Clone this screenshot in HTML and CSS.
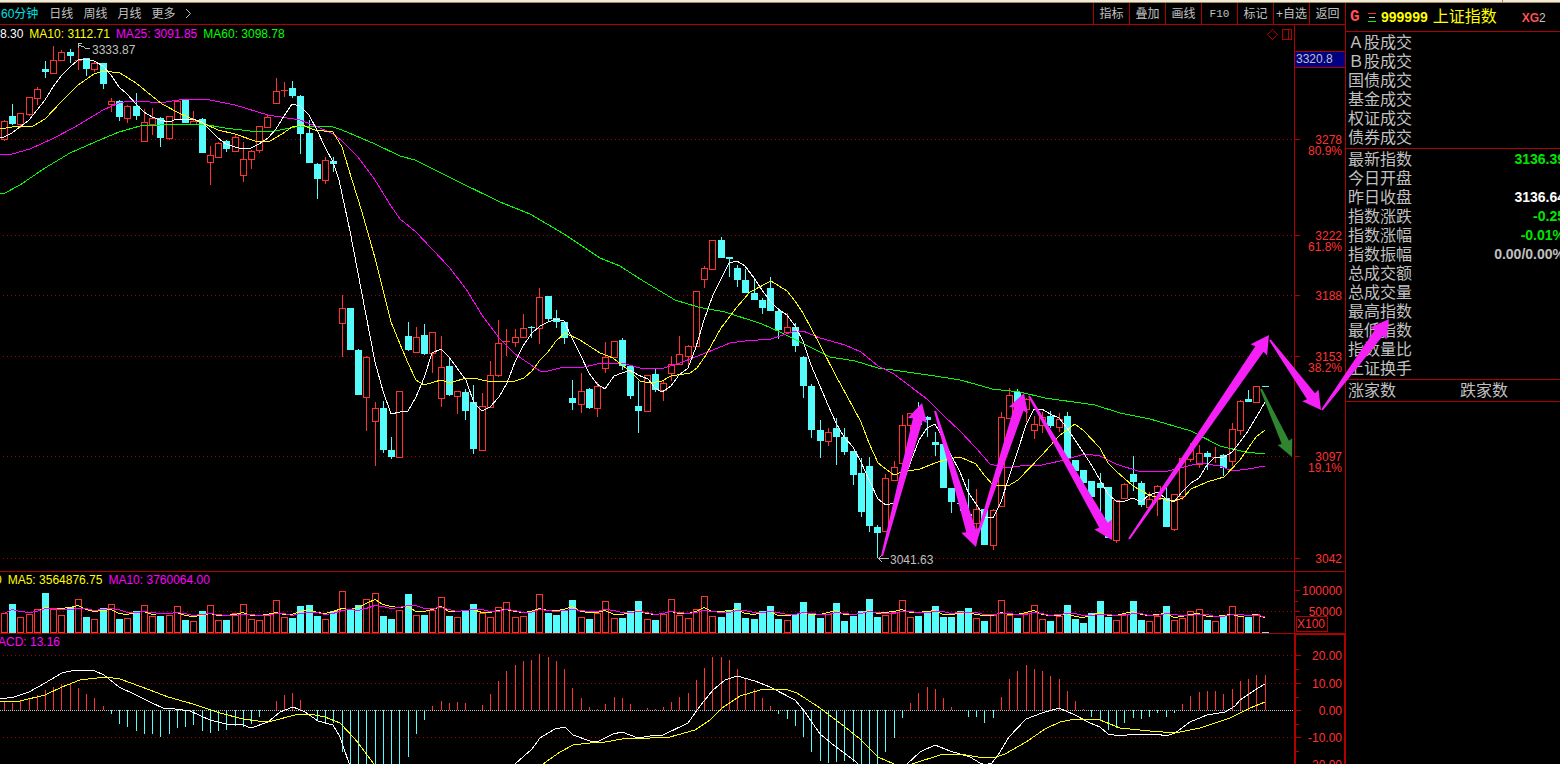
FILE: index.html
```
<!DOCTYPE html>
<html lang="zh-CN">
<head>
<meta charset="utf-8">
<title>999999 上证指数</title>
<link rel="stylesheet" href="styles.css">
</head>
<body>
<div class="strip"><span class="strip-mark"></span></div>
<div class="app">
  <main class="board">
    <nav class="toolbar">
      <div class="periods">
        <button class="period is-active">60分钟</button>
        <button class="period">日线</button>
        <button class="period">周线</button>
        <button class="period">月线</button>
        <button class="period">更多</button>
        <svg class="more" width="7" height="11" viewBox="0 0 7 11"><path d="M1 1 L5.5 5.5 L1 10"/></svg>
      </div>
      <div class="tools">
        <button class="tool">指标</button>
        <button class="tool">叠加</button>
        <button class="tool">画线</button>
        <button class="tool tool-key">F10</button>
        <button class="tool">标记</button>
        <button class="tool">+自选</button>
        <button class="tool">返回</button>
      </div>
    </nav>
    <div class="panels">
      <section class="panel">
        <svg class="plot" id="price" viewBox="0 25 1294 546" preserveAspectRatio="none"></svg>
        <p class="legend"><span class="white">8.30</span><span class="yellow">MA10: 3112.71</span><span class="magenta">MA25: 3091.85</span><span class="green">MA60: 3098.78</span></p>
      </section>
      <svg class="axis" id="price-axis"></svg>
      <section class="panel">
        <svg class="plot" id="volume" viewBox="0 572 1294 61" preserveAspectRatio="none"></svg>
        <p class="legend legend-volume"><span class="yellow">0</span><span class="yellow">MA5: 3564876.75</span><span class="magenta">MA10: 3760064.00</span></p>
      </section>
      <svg class="axis" id="volume-axis"></svg>
      <section class="panel panel-last">
        <svg class="plot" id="macd" viewBox="0 634 1294 130" preserveAspectRatio="none"></svg>
        <p class="legend legend-macd"><span class="magenta">MACD: 13.16</span></p>
      </section>
      <svg class="axis axis-focus" id="macd-axis"></svg>
    </div>
  </main>
  <aside class="quote">
    <header class="quote-head">
      <span class="flag">G</span>
      <svg class="bars" width="8" height="11" viewBox="0 0 8 11"><path class="bar-red" d="M0 1.5H8"/><path class="bar-mid" d="M1 5.5H7"/><path class="bar-green" d="M0 9.5H8"/></svg>
      <span class="code">999999</span>
      <h1 class="name">上证指数</h1>
      <span class="tag"><b>XG</b>2</span>
    </header>
    <dl class="rows">
      <div class="row"><dt>Ａ股成交</dt></div>
      <div class="row"><dt>Ｂ股成交</dt></div>
      <div class="row"><dt>国债成交</dt></div>
      <div class="row"><dt>基金成交</dt></div>
      <div class="row"><dt>权证成交</dt></div>
      <div class="row"><dt>债券成交</dt></div>
    </dl>
    <dl class="rows">
      <div class="row"><dt>最新指数</dt><dd class="down">3136.39</dd></div>
      <div class="row"><dt>今日开盘</dt></div>
      <div class="row"><dt>昨日收盘</dt><dd class="flat">3136.64</dd></div>
      <div class="row"><dt>指数涨跌</dt><dd class="down">-0.25</dd></div>
      <div class="row"><dt>指数涨幅</dt><dd class="down">-0.01%</dd></div>
      <div class="row"><dt>指数振幅</dt><dd>0.00/0.00%</dd></div>
      <div class="row"><dt>总成交额</dt></div>
      <div class="row"><dt>总成交量</dt></div>
      <div class="row"><dt>最高指数</dt></div>
      <div class="row"><dt>最低指数</dt></div>
      <div class="row"><dt>指数量比</dt></div>
      <div class="row"><dt>上证换手</dt></div>
    </dl>
    <div class="counts"><span>涨家数</span><span>跌家数</span></div>
  </aside>
</div>
<svg class="drawings" id="drawings"></svg>
<script src="chart.js"></script>
</body>
</html>
```
FILE: styles.css
```
* { box-sizing: border-box; }

:root {
  --line: #b00000;
  --up: #ff3232;
  --down: #54fcfc;
  --text: #c0c0c0;
  --magenta: #ff00ff;
}

body {
  margin: 0;
  height: 100vh;
  display: flex;
  flex-direction: column;
  overflow: hidden;
  position: relative;
  background: #000;
  color: var(--text);
  font-family: "Liberation Sans", "Noto Sans CJK SC", sans-serif;
  font-size: 12px;
}

p, dl, dd, h1 { margin: 0; }

.strip {
  height: 3px;
  flex: none;
  display: flex;
  justify-content: flex-end;
  padding-right: 57px;
  background: #f0ead8;
  border-bottom: 1px solid #a88850;
}
.strip-mark { width: 1px; background: #a88850; }

.app { flex: 1; min-height: 0; display: grid; grid-template-columns: minmax(0, 1fr) 215px; }

.board { display: flex; flex-direction: column; min-height: 0; }

.toolbar {
  height: 22px;
  flex: none;
  display: flex;
  justify-content: space-between;
  border-bottom: 1px solid var(--line);
}
.periods { display: flex; align-items: center; gap: 10px; padding-left: 1px; }
.tools { display: flex; }
button {
  margin: 0;
  padding: 0;
  border: 0;
  background: none;
  color: var(--text);
  font: 12px/20px "Liberation Sans", "Noto Sans CJK SC", sans-serif;
  white-space: nowrap;
}
.period.is-active { color: #00e0e0; padding-right: 1px; }
.more { fill: none; stroke: var(--text); shape-rendering: auto; }
.tool { width: 36px; border-left: 1px solid var(--line); }
.tool-key { font: 11px/20px "Liberation Mono", monospace; }

.panels {
  flex: 1;
  min-height: 0;
  display: grid;
  grid-template-columns: minmax(0, 1fr) 51px;
  grid-template-rows: 547fr 62fr 130fr;
}
.panel {
  display: grid;
  grid-template: minmax(0, 1fr) / minmax(0, 1fr);
  min-height: 0;
  overflow: hidden;
  border-bottom: 1px solid var(--line);
}
.panel-last { border-bottom: 0; }
.plot, .legend { grid-area: 1 / 1; }
.plot { width: 100%; height: 100%; display: block; }
.legend { display: flex; gap: 6px; line-height: 16px; padding-top: 1px; align-self: start; white-space: nowrap; }
.legend-volume { margin-left: -5px; padding-top: 0; }
.legend-macd { margin-left: -12px; padding-top: 0; }
.white { color: #fff; }
.yellow { color: #ff0; }
.magenta { color: var(--magenta); }
.green { color: #0f0; }

.axis {
  width: 100%;
  height: 100%;
  display: block;
  border-left: 1px solid var(--line);
  border-bottom: 1px solid var(--line);
}
.axis-focus { border-left-width: 2px; border-right: 1px solid var(--line); border-top: 1px solid var(--line); border-bottom: 0; }
.axis text { fill: var(--up); text-anchor: end; font-size: 12px; }
.axis .cursor { fill: var(--text); text-anchor: start; }
.axis .unit { text-anchor: start; }
.axis .box { fill: #000; stroke: var(--line); }
.axis .cursor-box { fill: #000080; stroke: var(--line); }
.tick { stroke: var(--line); }

svg { shape-rendering: crispEdges; }
.grid { stroke: #a00000; stroke-dasharray: 1 3; }
.zero { stroke: #c0c0c0; stroke-dasharray: 1 1; }
.up { stroke: var(--up); fill: #000; }
.dn { fill: var(--down); stroke: none; }
.dn-line { stroke: var(--down); }
.curve { fill: none; stroke-width: 1; }
.c-white { stroke: #fff; }
.c-yellow { stroke: #ff0; }
.c-magenta { stroke: var(--magenta); }
.c-green { stroke: #0f0; }
.note { fill: var(--text); font-size: 12px; }
.note-line { fill: none; stroke: var(--text); }
.mark { fill: none; stroke: var(--line); }

.quote { border-left: 1px solid var(--line); overflow: hidden; }
.quote-head {
  height: 29px;
  display: flex;
  align-items: center;
  padding-left: 4px;
  border-bottom: 1px solid var(--line);
}
.flag { width: 18px; color: #ff5050; font: bold 16px/20px "Liberation Mono", monospace; }
.bars { margin-right: 5px; }
.bar-red { stroke: var(--up); }
.bar-mid { stroke: var(--text); }
.bar-green { stroke: #0f0; }
.code { color: #ff0; font-size: 14px; font-weight: bold; margin-right: 5px; }
.name { color: #ff0; font-size: 16px; font-weight: normal; line-height: 20px; }
.tag { margin-left: 25px; font-size: 12px; line-height: 16px; padding-top: 2px; }
.tag b { color: #ff5050; }

.rows { padding: 1px 0 1px 2px; border-bottom: 1px solid var(--line); }
.row { display: flex; justify-content: space-between; align-items: center; height: 19px; margin-right: -5px; }
dt, .counts { font-size: 16px; line-height: 19px; white-space: nowrap; }
dd { font-size: 14px; font-weight: bold; line-height: 19px; white-space: nowrap; }
.down { color: #00e600; }
.flat { color: #fff; }
.counts {
  display: grid;
  grid-template-columns: 1fr 1fr;
  gap: 12px;
  padding: 1px 0 1px 2px;
  border-bottom: 1px solid var(--line);
}

.drawings { position: absolute; inset: 0; width: 100%; height: 100%; pointer-events: none; shape-rendering: auto; }
.arrow { fill: #f520f5; }
.arrow-green { fill: #2f8530; }
```
FILE: chart.js
```
// Each candle: direction (r = up, c = down), high, body top, body bottom, low.
const candles = `r 120 121 139 141,c 104 116 124 125,r 113 113 124 128,r 97 97 114 116,r 87 89 98 105,c 61 69 72 78,r 46 60 73 73,r 50 52 60 60,c 49 52 56 63,r 44 60 61 70,
c 58 58 69 76,r 62 63 69 72,c 63 63 84 89,r 98 101 104 112,c 100 101 117 121,r 105 106 118 123,c 93 106 116 120,r 109 122 141 141,r 108 118 124 135,c 117 118 138 147,
r 116 116 138 140,r 101 101 119 120,c 100 100 123 123,r 111 121 124 125,c 118 119 153 153,r 146 155 162 185,r 142 143 157 157,c 140 141 149 152,r 135 137 151 151,r 142 159 175 182,
r 150 151 159 169,r 126 126 150 153,r 115 117 127 128,r 78 91 103 104,r 82 90 91 97,c 81 88 96 98,c 95 96 134 154,c 120 133 163 163,c 163 164 179 199,r 157 160 180 184,
c 157 161 164 172,r 295 308 323 357,c 308 308 350 350,c 349 350 395 395,r 356 357 397 431,r 402 408 421 466,c 401 408 450 453,c 437 450 457 459,r 391 391 457 457,c 322 336 350 351,
r 327 337 352 352,c 324 335 354 355,r 332 332 353 373,r 336 367 398 407,c 357 366 395 396,r 391 391 396 414,c 389 392 411 420,c 385 402 449 454,r 393 406 450 450,r 361 375 407 407,
r 320 343 375 377,r 329 341 342 356,r 329 337 342 347,r 314 328 337 337,c 326 327 328 338,r 288 297 328 344,c 296 296 319 322,c 310 318 322 328,c 321 322 338 344,c 380 398 403 410,
r 373 391 404 413,c 388 389 408 409,r 382 386 408 417,r 342 357 368 373,r 341 341 357 358,c 338 340 366 370,c 365 366 396 399,c 381 406 411 433,r 375 375 411 412,c 369 374 390 392,
r 381 383 390 401,r 356 364 373 381,r 336 354 364 364,r 345 346 356 366,r 291 291 346 346,r 266 268 279 288,r 240 240 269 269,c 237 240 258 258,c 257 257 259 277,c 265 268 280 287,
c 269 280 293 293,c 278 293 300 300,c 298 300 308 314,c 277 288 311 311,c 308 311 330 339,r 313 327 332 332,c 323 327 346 352,c 356 357 386 398,c 384 386 430 438,c 420 430 441 458,
r 428 432 441 446,c 418 428 437 465,c 428 437 452 455,c 451 451 475 485,c 458 473 512 517,c 457 466 526 532,c 525 527 533 558,r 474 478 531 531,r 461 467 480 480,r 415 425 463 480,
r 413 413 425 430,c 402 410 425 430,c 416 417 420 437,c 432 442 445 456,c 444 444 488 488,c 488 488 502 513,c 502 503 504 511,c 479 514 516 520,r 489 509 523 533,c 509 509 545 545,
r 509 510 545 550,r 412 417 506 506,r 388 395 418 418,c 389 392 409 409,r 398 399 409 422,r 416 424 430 439,r 412 417 425 433,c 411 416 426 428,r 413 419 427 432,c 412 416 459 459,
c 460 460 471 471,c 470 470 483 487,c 481 481 497 508,c 473 483 488 513,c 487 487 538 538,r 500 500 540 543,r 483 484 498 498,c 456 474 482 491,c 481 483 505 507,r 492 499 507 507,
r 485 486 499 516,c 487 498 527 527,r 494 494 529 531,r 457 458 496 500,r 443 450 459 462,r 445 453 464 468,c 451 453 457 470,r 447 457 458 463,c 454 455 468 476,r 423 429 461 466,
r 400 401 430 435,c 390 399 402 402,r 386 386 402 402,c 386 386 387 387`.split(',').map(s => {
  const p = s.trim().split(' ');
  return [p[0], ...p.slice(1).map(Number)];
});

const nums = s => s.trim().split(/\s+/).map(Number);

// Top edge of every volume bar; bars stand on y = 633.
const volumes = nums(`613 604 617 614 609 593 609 615 607 599 617 619 608 604 619 618 611 605 616 616
615 606 620 621 611 605 620 620 613 604 619 620 615 600 617 618 606 605 616 619
611 591 609 605 599 593 616 619 610 594 615 615 610 597 616 617 610 604 613 617
607 602 617 616 612 594 613 615 610 600 617 619 613 601 618 618 611 601 619 620
614 599 615 618 609 596 616 617 611 603 618 619 611 606 619 620 614 602 614 618
614 603 621 616 611 599 617 615 612 600 617 616 612 606 617 617 611 608 618 621
615 600 615 618 613 605 619 621 616 605 619 623 613 601 617 620 614 601 620 621
616 606 620 618 611 609 620 621 616 606 616 617 614 632`);

// End of every MACD stick; the zero line is y = 710.
const sticks = nums(`702 703 700 698 695 690 687 684 684 688 694 698 706 714 724 727 731 734 734 737
734 728 727 725 731 733 731 730 726 727 724 717 710 701 695 693 700 710 720 722
723 752 770 770 770 770 770 770 770 757 734 720 706 701 703 702 703 710 705 694
681 671 665 661 660 654 657 661 669 688 698 707 709 704 697 698 704 710 708 709
707 702 697 693 680 668 657 657 660 669 678 689 698 706 714 719 726 737 752 761
763 762 761 762 770 770 770 752 738 718 703 693 687 689 698 707 711 717 717 723
718 697 679 671 665 669 671 676 679 691 701 709 717 720 730 728 723 718 719 717
713 717 713 704 696 692 691 691 694 689 681 679 675 675`);

const ma = {
  green: '0,193 5,193 20,185 45,168 70,153 95,142 119,132 140,126 180,124 202,124 225,128 250,131 270,132 300,126 333,127 342,130 375,144 400,156 415,160 435,170 455,180 500,202 530,214 564,234 600,258 620,266 640,279 675,300 698,307 725,312 762,324 780,332 800,342 830,357 855,361 878,368 900,371 935,376 960,380 975,384 992,389 1020,392 1045,398 1095,405 1120,413 1150,419 1191,431 1220,446 1245,452 1265,454',
  magenta: '0,154 12,154 30,149 52,139 75,127 103,110 119,103 130,101 150,102 160,103 185,99 205,99 235,105 268,115 300,120 318,127 333,134 342,141 358,157 375,180 391,206 400,219 416,232 432,249 449,267 466,289 482,315 499,338 515,354 540,371 548,371 564,367 580,368 597,364 622,363 640,368 664,368 680,363 713,350 730,343 745,341 771,339 795,331 803,331 820,338 845,345 861,352 878,366 894,374 911,387 927,399 943,415 960,431 976,448 990,464 1005,468 1020,466 1042,465 1060,461 1085,454 1100,456 1116,464 1141,472 1168,471 1180,468 1200,463 1220,466 1232,471 1248,469 1265,466',
  yellow: '0,129 12,127 33,126 45,119 62,101 78,85 94,74 103,71 120,73 136,83 152,96 162,104 177,112 190,118 205,124 218,130 235,134 255,141 270,141 282,134 292,127 302,125 315,130 333,132 342,147 352,180 362,212 375,258 383,290 391,322 400,344 408,363 416,380 424,385 441,380 450,383 466,378 478,379 491,382 515,381 524,378 532,371 540,360 548,352 556,341 565,333 580,340 600,353 613,358 622,365 632,373 640,381 650,383 662,381 671,376 690,373 697,368 706,355 721,328 737,307 750,292 771,281 787,291 795,301 803,313 820,345 836,376 853,407 861,422 869,443 878,463 894,475 902,472 920,469 935,463 948,459 960,457 976,464 985,476 993,485 1008,486 1018,480 1042,455 1059,436 1075,424 1083,430 1100,448 1108,463 1116,471 1133,486 1149,495 1166,500 1174,501 1183,498 1191,489 1207,482 1224,477 1240,460 1256,437 1265,430',
  white: '0,137 4,137 12,133 20,127 29,120 37,110 45,100 53,87 62,75 70,67 78,60 86,59 94,61 103,66 111,75 119,87 127,94 136,104 144,112 152,117 160,120 169,122 177,119 193,119 202,122 210,130 218,138 226,144 235,147 243,149 251,148 259,144 268,138 276,129 284,116 292,104 300,106 309,115 317,130 325,147 333,162 339,180 342,194 350,231 358,273 366,315 375,362 383,391 391,414 400,412 408,411 416,397 424,378 432,353 441,349 449,357 457,368 466,380 474,403 482,411 490,407 499,397 507,383 515,362 523,346 532,333 540,326 548,322 556,319 564,321 572,338 581,356 589,373 597,384 605,389 614,376 630,370 638,375 648,379 655,388 662,392 671,386 679,375 688,368 696,347 704,320 713,295 721,279 729,263 737,261 745,266 754,278 762,290 770,301 778,309 787,315 795,326 803,341 811,365 820,386 828,405 836,423 844,437 853,447 861,462 869,480 878,499 886,505 894,503 902,486 911,461 919,440 927,428 935,424 943,438 951,455 960,472 968,492 976,504 985,517 993,518 1001,502 1009,477 1018,450 1026,425 1034,409 1042,409 1050,414 1059,418 1067,428 1075,440 1083,452 1092,466 1100,480 1108,494 1116,501 1125,501 1133,498 1141,502 1149,495 1158,492 1166,499 1174,502 1182,492 1191,483 1199,478 1207,465 1215,457 1224,457 1232,452 1240,442 1248,431 1257,416 1265,402'
};

const dif = '0,699 14,697 29,692 45,683 62,673 75,670 95,671 104,675 119,687 136,695 152,703 163,708 175,709 190,711 210,720 226,724 243,725 251,728 268,722 280,712 293,707 305,712 318,721 333,725 340,737 352,772 500,778 515,764 532,749 540,738 555,729 565,727 573,735 590,741 597,742 613,734 622,732 638,738 650,736 663,735 688,723 700,706 713,690 725,680 737,676 755,681 770,687 795,700 805,712 820,734 836,747 855,761 868,774 897,774 907,764 920,752 935,745 950,751 970,757 980,763 985,765 992,763 1000,752 1009,737 1026,719 1042,713 1059,708 1075,715 1090,723 1100,727 1108,734 1120,736 1135,734 1157,734 1166,736 1175,733 1190,722 1207,715 1225,712 1235,706 1240,700 1255,690 1265,684';
const dea = '0,702 20,701 45,695 62,687 80,680 105,677 120,679 150,690 168,697 193,704 220,713 243,719 258,721 272,721 295,715 310,714 325,717 340,723 355,739 374,764 390,780 530,775 543,764 560,752 573,745 590,743 605,742 622,739 650,738 670,737 695,730 710,720 722,708 740,696 760,690 785,689 797,693 820,708 845,727 860,739 878,757 894,764 904,767 912,764 940,755 960,754 978,757 993,758 1005,754 1026,742 1045,729 1060,722 1075,719 1100,720 1120,728 1150,731 1175,733 1200,728 1230,718 1250,708 1265,702';

const xAt = i => Math.floor(4.3 + 8.24 * i);
const vline = (x, a, b, cls) => `<path class="${cls}" d="M${x + 0.5} ${a}V${b}"/>`;
const grid = ys => ys.map(y => `<path class="grid" d="M3 ${y + 0.5}H1294"/>`).join('');
const curve = (pts, color) => `<polyline class="curve c-${color}" points="${pts}"/>`;
const put = (id, html) => { document.getElementById(id).innerHTML = html; };

// Up candles are hollow, down candles solid; a one-pixel body is a dash.
function body(dir, x, top, bottom) {
  if (dir === 'c') return `<rect class="dn" x="${x - 3}" y="${top}" width="7" height="${bottom - top}"/>`;
  if (bottom - top === 1) return `<path class="up" d="M${x - 3} ${top + 0.5}H${x + 4}"/>`;
  return `<rect class="up" x="${x - 2.5}" y="${top + 0.5}" width="6" height="${bottom - top}"/>`;
}

function drawPrice() {
  let out = grid([139, 235, 295, 356, 456, 558]);
  candles.forEach(([dir, hi, top, bottom, lo], i) => {
    const x = xAt(i), cls = dir === 'r' ? 'up' : 'dn-line';
    if (hi < top) out += vline(x, hi, top, cls);
    if (lo > bottom) out += vline(x, bottom, lo, cls);
    out += body(dir, x, top, bottom);
  });
  for (const color in ma) out += curve(ma[color], color);
  out += '<path class="note-line" d="M90 48.5H86L83 46.5L78.5 45.5M82 43.5H78.5V48"/><text class="note" x="92" y="54">3333.87</text>';
  out += '<path class="note-line" d="M889 558.5H878.5M882 555L878.5 558.5L882 562"/><text class="note" x="890" y="564">3041.63</text>';
  out += '<path class="mark" d="M1272.5 29.5L1277.5 34.5L1272.5 39.5L1267.5 34.5ZM1282.5 29.5H1291.5V39.5H1282.5ZM1288.5 29V39"/>';
  put('price', out);
}

function average(n) {
  return volumes.map((_, i) => {
    const part = volumes.slice(Math.max(0, i - n + 1), i + 1);
    return `${xAt(i)},${Math.round(part.reduce((a, b) => a + b, 0) / part.length) + 0.5}`;
  }).join(' ');
}

function drawVolume() {
  let out = grid([611]);
  volumes.forEach((top, i) => { out += body(candles[i][0], xAt(i), top, candles[i][0] === 'r' ? 632 : 633); });
  put('volume', out + curve(average(5), 'yellow') + curve(average(10), 'magenta'));
}

function drawMacd() {
  let out = grid([655, 683, 737]) + '<path class="zero" d="M0 710.5H1294"/>';
  sticks.forEach((y, i) => {
    if (y !== 710) out += vline(xAt(i), Math.min(y, 710), Math.max(y, 710), y < 710 ? 'up' : 'dn-line');
  });
  put('macd', out + curve(dif, 'white') + curve(dea, 'yellow'));
}

// Labels sit at a share of the axis height so that they follow the plot.
function axis(id, start, span, right, labels, ticks, extra = '') {
  const pos = y => (y - start) / span * 100 + '%';
  put(id, extra + ticks.map(([y, w]) => `<line class="tick" x1="0" x2="${w}" y1="${pos(y + 0.5)}" y2="${pos(y + 0.5)}"/>`).join('')
    + labels.map(([y, t]) => `<text x="${right}" y="${pos(y + 5)}">${t}</text>`).join(''));
}

// A stroke that widens from a point at the tail to a broad, swept-back head.
function arrow([x1, y1, x2, y2], cls = 'arrow', neck = 5, wing = 10, head = 18) {
  const len = Math.hypot(x2 - x1, y2 - y1), ux = (x2 - x1) / len, uy = (y2 - y1) / len;
  const at = (d, w) => `${(x1 + ux * d - uy * w).toFixed(1)},${(y1 + uy * d + ux * w).toFixed(1)}`;
  return `<polygon class="${cls}" points="${[at(0, 1), at(len - head + 1, neck), at(len - head, wing), at(len, 0), at(len - head, -wing), at(len - head + 1, -neck), at(0, -1)].join(' ')}"/>`;
}

drawPrice();
drawVolume();
drawMacd();
axis('price-axis', 25, 546, 47,
  [[139, '3278'], [150, '80.9%'], [235, '3222'], [246, '61.8%'], [295, '3188'], [356, '3153'], [367, '38.2%'], [456, '3097'], [467, '19.1%'], [558, '3042']],
  [[139, 5], [235, 5], [295, 5], [356, 5], [456, 5], [558, 5]],
  '<rect class="cursor-box" x="-1" y="26.5" width="60" height="16"/><text class="cursor" x="1" y="38">3320.8</text>');
axis('volume-axis', 572, 61, 47, [[590, '100000'], [611, '50000']], [[590, 5], [601, 3], [611, 5]],
  '<rect class="box" x="1.5" y="44.5" width="31" height="15"/><text class="unit" x="2" y="56">X100</text>');
axis('macd-axis', 635, 129, 46, [[655, '20.00'], [683, '10.00'], [710, '0.00'], [737, '-10.00'], [764, '-20.00']],
  [[655, 5], [669, 3], [683, 5], [697, 3], [710, 5], [724, 3], [737, 5], [751, 3]]);
put('drawings', [
  [882, 556, 922, 403], [935, 411, 976, 547], [977, 537, 1024, 393], [1029, 396, 1112, 540],
  [1129, 539, 1269, 335], [1270, 340, 1321, 410], [1322, 410, 1389, 319]
].map(a => arrow(a)).join('') + arrow([1261, 389, 1292, 457], 'arrow-green', 4, 8, 17));
```
